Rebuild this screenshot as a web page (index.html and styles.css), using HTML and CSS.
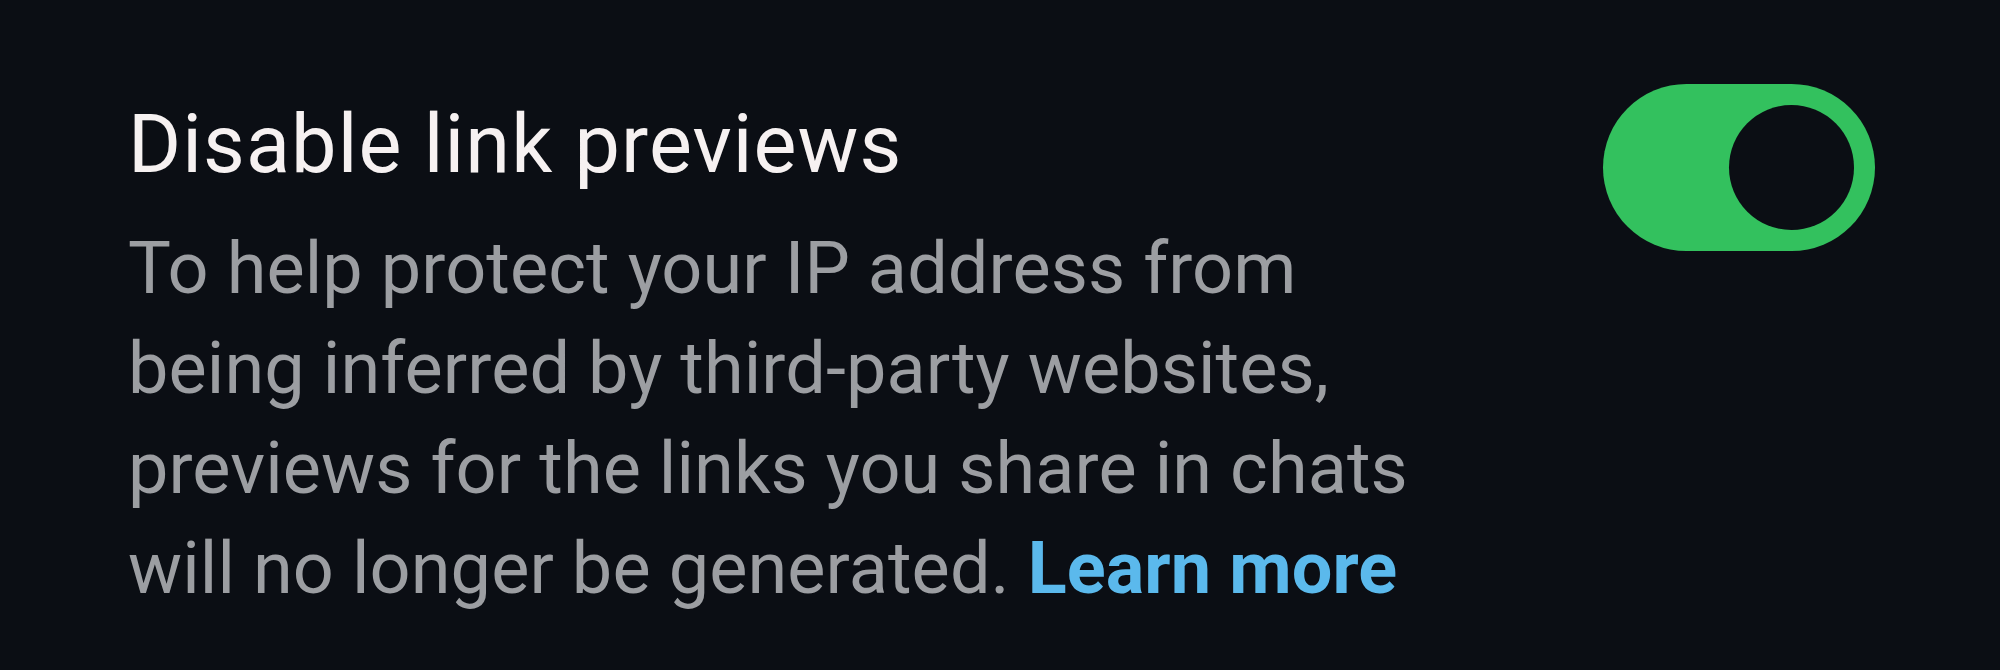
FILE: index.html
```html
<!DOCTYPE html>
<html lang="en">
<head>
<meta charset="utf-8">
<title>Disable link previews</title>
<link rel="stylesheet" href="styles.css">
</head>
<body>
<div class="setting-row">
  <div class="setting-text">
    <div class="setting-title">Disable link previews</div>
    <p class="setting-desc">To help protect your IP address from being inferred by third-party websites, previews for the links you share in chats will no longer be generated. <a class="learn-more" href="#">Learn more</a></p>
  </div>
  <div class="toggle" role="switch" aria-checked="true">
    <span class="toggle-knob"></span>
  </div>
</div>
</body>
</html>
```

FILE: styles.css
```css
html, body {
  margin: 0;
  padding: 0;
  background: #0b0e14;
}

body {
  width: 2000px;
  height: 670px;
  overflow: hidden;
  font-family: Roboto, "Noto Sans", "Liberation Sans", sans-serif;
}

.setting-row {
  display: flex;
  align-items: flex-start;
  padding: 84px 125px 0 128px;
}

.setting-text {
  margin-top: 13px;
  max-width: 1300px;
}

.setting-title {
  color: #f6f1f1;
  font-size: 81px;
  letter-spacing: 1.1px;
  line-height: 96px;
  font-weight: 400;
}

.setting-desc {
  margin: 26px 0 0 0;
  color: #9c9ea2;
  font-size: 72px;
  letter-spacing: 0.1px;
  line-height: 100px;
  font-weight: 400;
}

.learn-more {
  color: #5bb9ec;
  font-weight: 700;
  text-decoration: none;
}

.toggle {
  margin-left: auto;
  flex: none;
  width: 272px;
  height: 167px;
  box-sizing: border-box;
  padding: 0 21px;
  border-radius: 84px;
  background: #33c15e;
  display: flex;
  align-items: center;
  justify-content: flex-end;
}

.toggle-knob {
  width: 125px;
  height: 125px;
  border-radius: 50%;
  background: #0b0e14;
}
```
